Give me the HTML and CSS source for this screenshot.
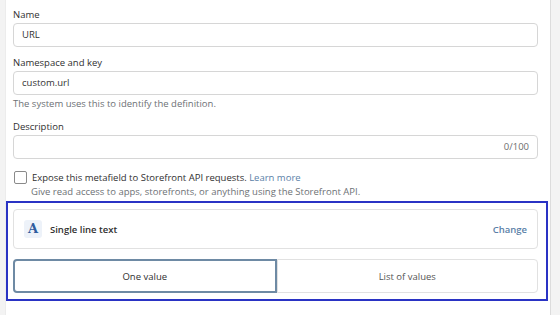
FILE: index.html
```html
<!DOCTYPE html>
<html lang="en">

<head>
    <meta charset="UTF-8">
    <meta name="viewport" content="width=device-width, initial-scale=1.0">
    <title>Metafield definition</title>
    <link rel="stylesheet" href="styles.css">
</head>

<body>

    <div class="page">
        <div class="field">
            <label class="label">Name</label>
            <div class="input">URL</div>
        </div>
        <div class="field">
            <label class="label">Namespace and key</label>
            <div class="input">custom.url</div>
            <div class="help">The system uses this to identify the definition.</div>
        </div>
        <div class="field">
            <label class="label">Description</label>
            <div class="input counter"><span class="count">0/100</span></div>
        </div>

        <div class="expose">
            <div class="check-row">
                <span class="checkbox"></span>
                <span>Expose this metafield to Storefront API requests. <a class="link">Learn more</a></span>
            </div>
            <div class="help indent">Give read access to apps, storefronts, or anything using the Storefront API.</div>
        </div>

        <!-- highlighted type picker -->
        <div class="highlight">
            <div class="type-card">
                <span class="type-icon">A</span>
                <span class="type-name">Single line text</span>
                <a class="change">Change</a>
            </div>
            <div class="segments">
                <div class="segment selected">One value</div>
                <div class="segment">List of values</div>
            </div>
        </div>
    </div>

</body>

</html>
```

FILE: styles.css
```css
body {
    margin: 0;
    background-color: #f3f3f3;
    font-family: "Open Sans", "Noto Sans", sans-serif;
    font-size: 9.5px;
    color: #303030;
}

.page {
    margin-left: 5px;
    width: 546px;
    height: 315px;
    background-color: #ffffff;
    border-left: 1px solid #ececec;
    border-right: 1px solid #dcdcdc;
    padding: 8px 0 0 7px;
    box-sizing: border-box;
}

.field {
    width: 525px;
    margin-bottom: 9px;
}

.label {
    display: block;
    height: 14px;
    line-height: 14px;
    margin-bottom: 1px;
}

.input {
    height: 24px;
    border: 1px solid #d6d6d6;
    border-radius: 4px;
    box-sizing: border-box;
    padding: 0 8px;
    line-height: 22px;
    color: #333333;
}

.counter {
    text-align: right;
}

.count {
    color: #6d6d6d;
}

.help {
    margin-top: 2px;
    line-height: 14px;
    color: #6d7175;
}

.expose {
    margin-top: 11px;
    width: 525px;
}

.check-row {
    display: flex;
    align-items: center;
    gap: 5px;
    height: 14px;
    margin-left: 1px;
}

.checkbox {
    width: 11px;
    height: 11px;
    border: 1px solid #8a8a8a;
    border-radius: 2px;
}

.link {
    color: #5b7fa8;
}

.indent {
    margin-left: 18px;
    margin-top: 1px;
}

.highlight {
    margin-left: -7px;
    margin-top: 2px;
    width: 542px;
    height: 100px;
    border: 2px solid #2a33c4;
    box-sizing: border-box;
    padding: 6px 8px 0 5px;
}

.type-card {
    height: 40px;
    border: 1px solid #e1e1e1;
    border-radius: 4px;
    box-sizing: border-box;
    display: flex;
    align-items: center;
    padding: 0 10px 0 10px;
}

.type-icon {
    width: 18px;
    height: 18px;
    background-color: #edf2f9;
    border-radius: 3px;
    color: #2f5c9e;
    font-family: "DejaVu Serif", serif;
    font-weight: bold;
    font-size: 13px;
    line-height: 18px;
    text-align: center;
}

.type-name {
    margin-left: 8px;
    font-weight: 600;
    flex: 1;
}

.change {
    color: #5b7fa8;
    font-weight: 600;
}

.segments {
    margin-top: 10px;
    height: 34px;
    display: flex;
}

.segment {
    flex: 1;
    display: flex;
    align-items: center;
    justify-content: center;
    border: 1px solid #e1e1e1;
    border-radius: 0 4px 4px 0;
    color: #555555;
}

.segment.selected {
    border: 2px solid #6e8aa4;
    border-radius: 4px 0 0 4px;
    color: #303030;
}
```
